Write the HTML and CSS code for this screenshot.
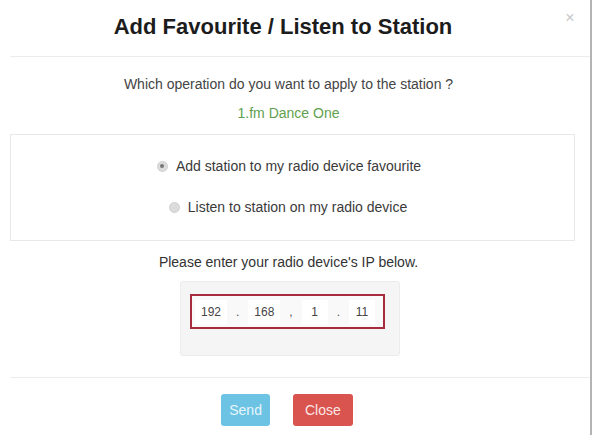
FILE: index.html
```html
<!DOCTYPE html>
<html>
<head>
<meta charset="utf-8">
<link rel="stylesheet" href="styles.css">
</head>
<body>
<div class="modal">
  <div class="modal-header">
    <h4 class="modal-title">Add Favourite / Listen to Station</h4>
    <span class="close">×</span>
  </div>
  <div class="modal-body">
    <p class="question">Which operation do you want to apply to the station ?</p>
    <p class="station">1.fm Dance One</p>
    <div class="panel">
      <label class="radio-row first"><span class="radio checked"></span>Add station to my radio device favourite</label>
      <label class="radio-row second"><span class="radio"></span>Listen to station on my radio device</label>
    </div>
    <p class="ip-label">Please enter your radio device's IP below.</p>
    <div class="well">
      <div class="ip-box">
        <span class="octet">192</span><span class="sep">.</span>
        <span class="octet">168</span><span class="sep">,</span>
        <span class="octet">1</span><span class="sep">.</span>
        <span class="octet">11</span>
      </div>
    </div>
  </div>
  <div class="modal-footer">
    <button class="btn btn-send">Send</button>
    <button class="btn btn-close">Close</button>
  </div>
</div>
</body>
</html>
```
FILE: styles.css
```css
html, body {
  margin: 0;
  padding: 0;
  background: #ffffff;
}
body {
  font-family: "Liberation Sans", Arial, sans-serif;
  color: #3a3a3a;
  font-size: 14px;
}
.modal {
  margin-left: 10px;
  width: 580px;
  height: 435px;
  border-right: 2px solid #b4b4b4;
  display: flex;
  flex-direction: column;
  background: #fff;
}
.modal-header {
  height: 57px;
  border-bottom: 1px solid #ececec;
  display: flex;
  align-items: center;
  box-sizing: border-box;
  padding-bottom: 2px;
}
.modal-title {
  flex: 1;
  margin: 0;
  text-align: center;
  font-size: 22px;
  font-weight: bold;
  color: #1c1c1c;
  padding-left: 4px;
}
.close {
  width: 36px;
  text-align: center;
  font-size: 16px;
  color: #c8c8c8;
  align-self: flex-start;
  margin-top: 9px;
  margin-right: 2px;
}
.modal-body {
  padding: 18px 15px 0 0;
  display: flex;
  flex-direction: column;
  align-items: center;
  height: 321px;
  box-sizing: border-box;
  border-bottom: 1px solid #ececec;
}
.modal-body p {
  margin: 0 8px 0 0;
  line-height: 18px;
}
.question {
  color: #444;
}
.station {
  margin-top: 11px !important;
  color: #5f9f4f;
}
.panel {
  margin-top: 12px;
  align-self: stretch;
  height: 107px;
  box-sizing: border-box;
  border: 1px solid #e8e8e8;
  display: flex;
  flex-direction: column;
  align-items: center;
  padding: 22px 9px 0 0;
}
.radio-row {
  display: flex;
  align-items: center;
  line-height: 18px;
  color: #3a3a3a;
}
.radio-row.first {
  margin-left: 2px;
}
.radio-row.second {
  margin-top: 23px;
}
.radio {
  width: 9px;
  height: 9px;
  border-radius: 50%;
  background: #dcdcdc;
  border: 1px solid #d0d0d0;
  margin-right: 8px;
  display: inline-flex;
  align-items: center;
  justify-content: center;
}
.radio.checked::after {
  content: "";
  width: 4px;
  height: 4px;
  border-radius: 50%;
  background: #777;
}
.ip-label {
  margin-top: 12px !important;
  color: #333;
}
.well {
  margin-top: 10px;
  margin-right: 5px;
  width: 220px;
  height: 75px;
  box-sizing: border-box;
  background: #f5f5f5;
  border: 1px solid #ececec;
  border-radius: 3px;
  padding: 12px 14px 0 9px;
}
.ip-box {
  height: 35px;
  box-sizing: border-box;
  border: 2px solid #a82a3e;
  background: #f9f9f9;
  display: flex;
  align-items: center;
  justify-content: space-between;
  padding: 0 8px 0 3px;
  font-size: 12px;
  color: #444;
}
.octet {
  background: #fff;
  padding: 5px 6px;
  min-width: 14px;
  text-align: center;
}
.sep {
  color: #555;
}
.modal-footer {
  display: flex;
  justify-content: center;
  gap: 23px;
  padding-top: 16px;
  padding-right: 26px;
}
.btn {
  font-family: "Liberation Sans", Arial, sans-serif;
  font-size: 14px;
  height: 32px;
  border: none;
  border-radius: 3px;
  color: #fff;
}
.btn-send {
  background: #6cc3e4;
  color: #e8f6fb;
  padding: 0 8px;
}
.btn-close {
  background: #d9534f;
  color: #fbe6e5;
  padding: 0 12px;
}
```
